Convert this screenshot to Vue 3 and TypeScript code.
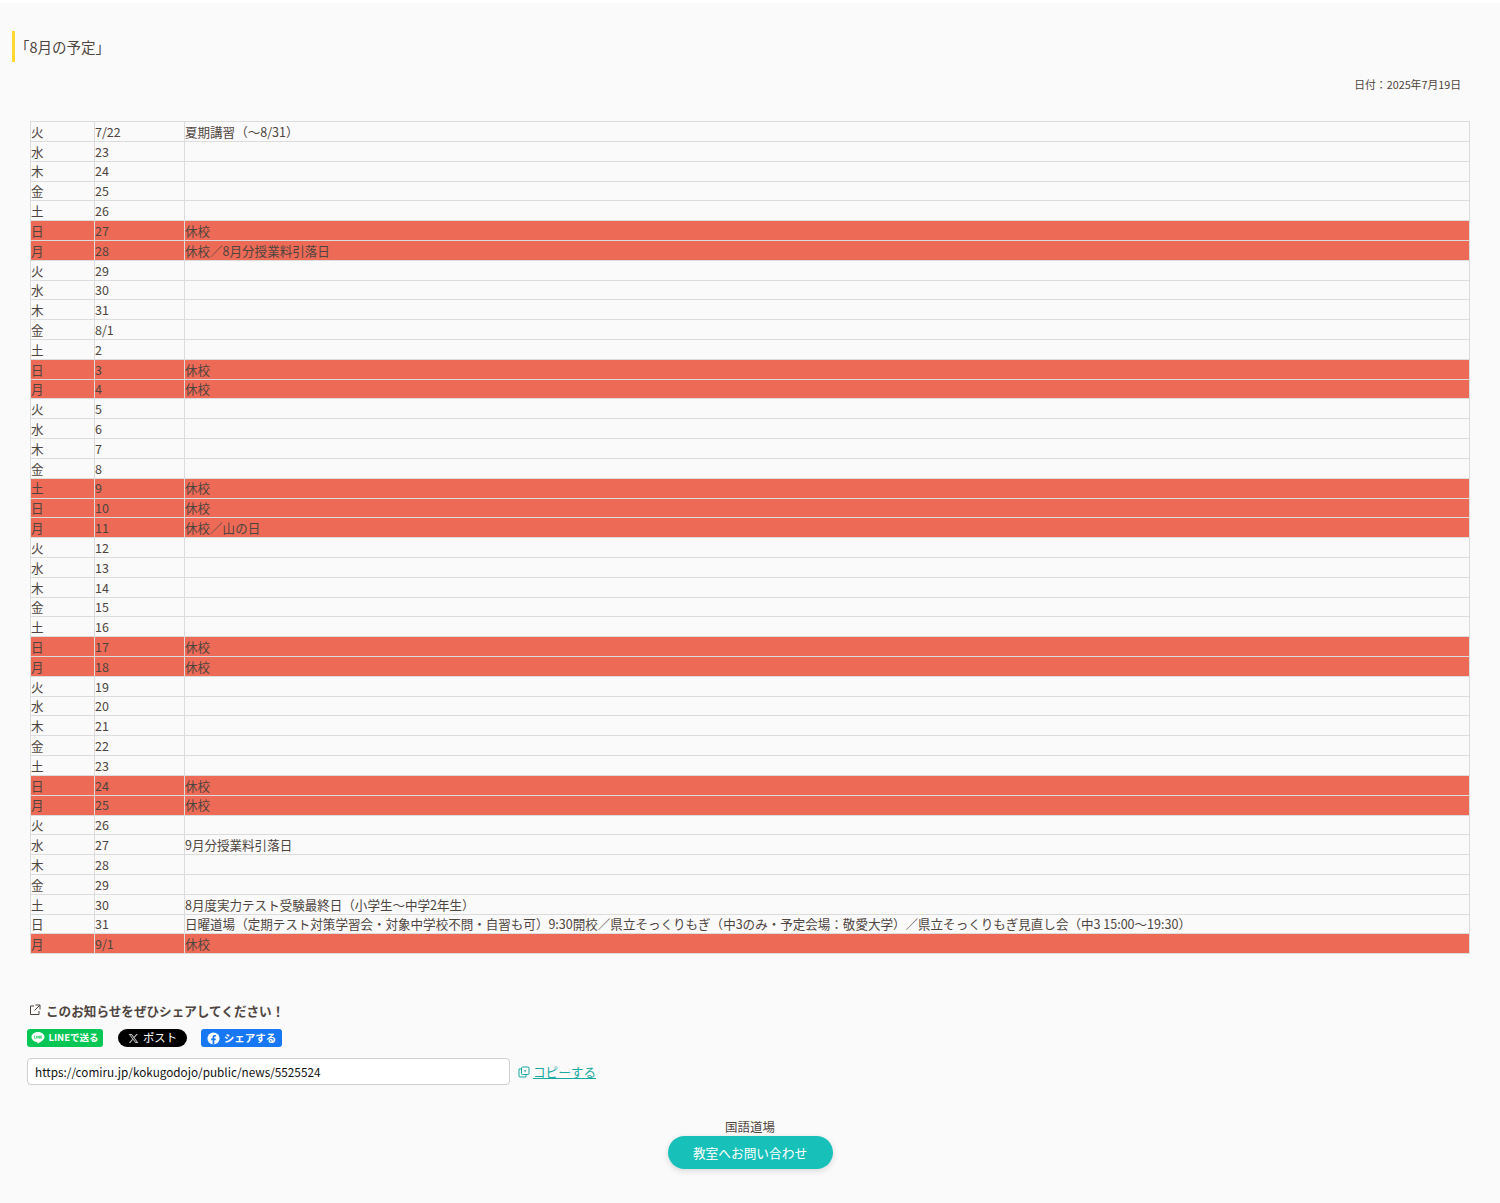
<script setup lang="ts">
interface Row { d: string; n: string; t: string; off: boolean }
const raw: [string, string, string?, boolean?][] = [
  ['火', '7/22', '夏期講習（〜8/31）'], ['水', '23'], ['木', '24'], ['金', '25'], ['土', '26'],
  ['日', '27', '休校', true], ['月', '28', '休校／8月分授業料引落日', true],
  ['火', '29'], ['水', '30'], ['木', '31'], ['金', '8/1'], ['土', '2'],
  ['日', '3', '休校', true], ['月', '4', '休校', true],
  ['火', '5'], ['水', '6'], ['木', '7'], ['金', '8'],
  ['土', '9', '休校', true], ['日', '10', '休校', true], ['月', '11', '休校／山の日', true],
  ['火', '12'], ['水', '13'], ['木', '14'], ['金', '15'], ['土', '16'],
  ['日', '17', '休校', true], ['月', '18', '休校', true],
  ['火', '19'], ['水', '20'], ['木', '21'], ['金', '22'], ['土', '23'],
  ['日', '24', '休校', true], ['月', '25', '休校', true],
  ['火', '26'], ['水', '27', '9月分授業料引落日'], ['木', '28'], ['金', '29'],
  ['土', '30', '8月度実力テスト受験最終日（小学生〜中学2年生）'],
  ['日', '31', '日曜道場（定期テスト対策学習会・対象中学校不問・自習も可）9:30開校／県立そっくりもぎ（中3のみ・予定会場：敬愛大学）／県立そっくりもぎ見直し会（中3 15:00〜19:30）'],
  ['月', '9/1', '休校', true],
]
const rows: Row[] = raw.map(([d, n, t, off]) => ({ d, n, t: t ?? '', off: !!off }))
</script>

<template>
  <div class="page">
    <h2 class="heading">「8月の予定」</h2>
    <p class="date">日付：2025年7月19日</p>
    <table class="sched">
      <colgroup>
        <col class="c1" />
        <col class="c2" />
        <col />
      </colgroup>
      <tbody>
        <tr v-for="(r, i) in rows" :key="i" :class="{ off: r.off }">
          <td>{{ r.d }}</td>
          <td>{{ r.n }}</td>
          <td>{{ r.t }}</td>
        </tr>
      </tbody>
    </table>

    <section class="share">
      <div class="share-title">
        <svg class="ext" viewBox="0 0 12 12" width="12" height="12" fill="none" stroke="#4f4540" stroke-width="1">
          <path d="M5 2H1.500v8.500H10V7" />
          <path d="M6.500 1h4.500v4.500M11 1 5.500 6.500" />
        </svg>
        <span>このお知らせをぜひシェアしてください！</span>
      </div>
      <div class="btns">
        <span class="sbtn line">
          <svg viewBox="0 0 14 14" width="14" height="14">
            <path fill="#fff" d="M7 1C3.400 1 .5 3.200.5 6c0 2.500 2.300 4.600 5.400 5 .6.100.5.400.4 1-.1.500.2.700.7.400 2.500-1.300 6.500-3.600 6.500-6.400C13.500 3.200 10.600 1 7 1z" />
            <path fill="#06c755" d="M3.200 4.800h.7v2.100h1v.6H3.200zM5.300 4.800H6v2.700h-.7zM6.500 4.800h.7l.9 1.400V4.800h.7v2.700h-.7l-.9-1.400v1.400h-.7zM9.300 4.800h1.500v.6H10v.4h.8v.6H10v.5h.8v.6H9.300z" />
          </svg>
          <span class="lift">LINEで送る</span>
        </span>
        <span class="sbtn x">
          <svg viewBox="0 0 24 24" width="11" height="11">
            <path fill="#bbb" d="M18.200 2.200h3.300l-7.200 8.300 8.500 11.200h-6.700l-5.200-6.800-6 6.800H1.700l7.700-8.800L1.300 2.200H8.200l4.700 6.200zm-1.200 17.500h1.800L7.100 4.100h-2z" />
          </svg>
          <span class="lift">ポスト</span>
        </span>
        <span class="sbtn fb">
          <svg viewBox="0 0 14 14" width="13" height="13">
            <circle cx="7" cy="7" r="6.500" fill="#fff" />
            <path fill="#1877f2" d="M6 13.500V9H4.400V7H6V5.600C6 4 7 3.100 8.400 3.100c.7 0 1.300.1 1.300.1v1.600h-.8c-.7 0-1 .5-1 1V7h1.700l-.3 2H7.900v4.500z" />
          </svg>
          <span class="lift">シェアする</span>
        </span>
      </div>
      <div class="url-row">
        <input class="url" type="text" readonly value="https://comiru.jp/kokugodojo/public/news/5525524" />
        <svg class="copy" viewBox="0 0 12 12" width="12" height="12" fill="none" stroke="#17a8a0" stroke-width="1">
          <rect x="3.500" y="1" width="7.500" height="7.500" rx="1" />
          <path d="M3.500 3H1v7a1 1 0 0 0 1 1h6V8.500" />
          <circle cx="7.200" cy="4.800" r=".9" fill="#17a8a0" stroke="none" />
        </svg>
        <a class="copy-link">コピーする</a>
      </div>
    </section>

    <footer class="foot">
      <div class="school">国語道場</div>
      <button class="contact" type="button">教室へお問い合わせ</button>
    </footer>
  </div>
</template>

<style scoped>
.page {
  box-sizing: border-box;
  height: 1200px;
  margin-top: 3px;
  background: #fafafa;
  color: #4f4540;
  font-family: "Noto Sans CJK JP", "Noto Sans", sans-serif;
  font-size: 12.5px;
  padding: 28px 12px 0;
  overflow: hidden;
}
.heading {
  margin: 0;
  height: 31px;
  line-height: 32px;
  border-left: 3px solid #ffd92f;
  font-size: 14.5px;
  font-weight: 400;
}
.date {
  margin: 14px 27px 0 0;
  text-align: right;
  font-size: 10.8px;
  line-height: 16px;
}
.sched {
  width: 1440px;
  margin: 29.1px 0 0 18px;
  border-collapse: collapse;
  table-layout: fixed;
}
.c1 { width: 64px; }
.c2 { width: 90px; }
.sched td {
  border: 1px solid #dcdcdc;
  padding: 0.75px 0 0;
  font-size: 12.54px;
  line-height: 18.06px;
  white-space: nowrap;
}
.sched tr.off td { background: #ed6a56; }
.share { margin: 46px 0 0 15px; }
.share-title {
  display: flex;
  align-items: center;
  gap: 5px;
  margin-left: 2px;
  height: 20px;
  font-size: 12.6px;
  font-weight: 700;
}
.btns {
  display: flex;
  gap: 15px;
  margin-top: 9px;
}
.sbtn {
  display: inline-flex;
  align-items: center;
  justify-content: center;
  box-sizing: border-box;
  height: 18px;
  color: #fff;
  font-size: 9.5px;
  font-weight: 700;
  gap: 3px;
}
.lift { margin-bottom: 1.5px; }
.line { width: 76px; background: #06c755; border-radius: 3px; }
.x { width: 69px; background: #000; border-radius: 9px; font-weight: 400; font-size: 11.4px; gap: 4px; }
.fb { width: 81px; background: #1877f2; border-radius: 3px; gap: 4px; margin-left: -1px; font-size: 10.5px; }
.url-row {
  display: flex;
  align-items: center;
  margin-top: 11px;
}
.url {
  box-sizing: border-box;
  width: 483px;
  height: 27px;
  padding: 0 7px;
  border: 1px solid #cfcfcf;
  border-radius: 4px;
  background: #fff;
  color: #111;
  font: 11.75px "Noto Sans CJK JP", "Noto Sans", sans-serif;
  outline: none;
}
.copy { margin-left: 8px; }
.copy-link {
  margin-left: 3px;
  color: #17a8a0;
  font-size: 12.6px;
  text-decoration: underline;
}
.foot {
  display: flex;
  flex-direction: column;
  align-items: center;
  margin-top: 33px;
}
.school { font-size: 12.5px; line-height: 18px; }
.contact {
  width: 165px;
  height: 33px;
  border: 0;
  border-radius: 17px;
  background: #17c1b9;
  color: #fff;
  font: 12.7px "Noto Sans CJK JP", sans-serif;
  box-shadow: 0 2px 6px rgba(0, 0, 0, .14);
}
</style>

<style>
html, body { background: #fff; }
</style>
